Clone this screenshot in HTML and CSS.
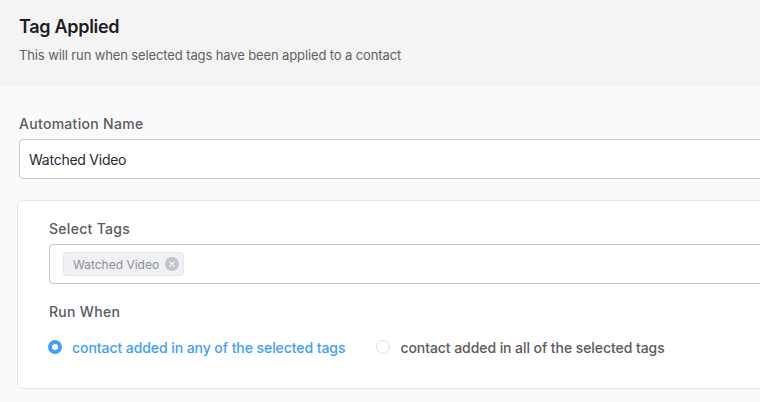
FILE: index.html
```html
<!DOCTYPE html>
<html>
<head>
<meta charset="utf-8">
<link rel="stylesheet" href="styles.css">
</head>
<body>
<div class="header">
  <h1 class="title">Tag Applied</h1>
  <p class="subtitle">This will run when selected tags have been applied to a contact</p>
</div>
<div class="main">
  <div class="content">
    <label class="label">Automation Name</label>
    <div class="input">Watched Video</div>
    <div class="card">
      <label class="label">Select Tags</label>
      <div class="input tags">
        <span class="chip">Watched Video<span class="chip-close"><svg viewBox="0 0 14 14" width="14" height="14"><circle cx="7" cy="7" r="7" fill="#c0c4cc"/><path d="M4.8 4.8 L9.2 9.2 M9.2 4.8 L4.8 9.2" stroke="#fff" stroke-width="1.1" stroke-linecap="round"/></svg></span></span>
      </div>
      <label class="label run">Run When</label>
      <div class="radios">
        <span class="radio checked"><span class="dot"></span><span class="rtext">contact added in any of the selected tags</span></span>
        <span class="radio"><span class="dot"></span><span class="rtext">contact added in all of the selected tags</span></span>
      </div>
    </div>
  </div>
</div>
</body>
</html>
```
FILE: styles.css
```css
html, body {
  margin: 0;
  padding: 0;
  overflow: hidden;
  background: #fafafa;
  font-family: Inter, "Noto Sans", sans-serif;
}
.header {
  background: #f4f4f5;
  padding: 16px 19px 22px;
}
.title {
  margin: 0 0 8px;
  font-size: 18px;
  line-height: 22px;
  font-weight: 600;
  color: #1d1d1f;
  letter-spacing: -0.3px;
}
.subtitle {
  margin: 0;
  font-size: 13px;
  line-height: 18px;
  color: #606266;
  letter-spacing: -0.12px;
}
.main {
  background: #fafafa;
  padding: 28px 0 14px 19px;
  overflow: hidden;
}
.content {
  margin-right: -60px;
  display: flex;
  flex-direction: column;
}
.label {
  display: block;
  font-size: 14px;
  line-height: 20px;
  font-weight: 500;
  color: #5a5a60;
  margin-bottom: 5px;
  letter-spacing: 0.3px;
}
.input {
  box-sizing: border-box;
  height: 40px;
  background: #fff;
  border: 1px solid #c6c6cb;
  border-radius: 4px;
  padding: 0 9px;
  display: flex;
  align-items: center;
  font-size: 14px;
  color: #2b2b30;
  letter-spacing: -0.25px;
}
.card {
  margin-top: 21px;
  margin-left: -2px;
  background: #fff;
  border: 1px solid #e3e3e6;
  border-radius: 6px;
  padding: 18px 31px 31px;
}
.tags {
  padding: 0 13px;
  letter-spacing: 0;
}
.chip {
  display: inline-flex;
  align-items: center;
  height: 24px;
  box-sizing: border-box;
  padding: 0 4px 0 9px;
  background: #f0f1f4;
  border: 1px solid #e6e7ea;
  border-radius: 4px;
  font-size: 12px;
  color: #8e8f95;
}
.chip-close {
  display: inline-flex;
  margin-left: 6px;
}
.run {
  margin-top: 18px;
  margin-bottom: 16px;
}
.radios {
  display: flex;
  align-items: center;
  gap: 32px;
  height: 20px;
  margin-top: -1px;
}
.radio {
  display: inline-flex;
  align-items: center;
  font-size: 14px;
  font-weight: 500;
  color: #5a5a60;
  letter-spacing: -0.07px;
}
.dot {
  box-sizing: border-box;
  width: 14px;
  height: 14px;
  border-radius: 50%;
  border: 1px solid #dcdfe6;
  background: #fff;
  margin-right: 10px;
  margin-left: -1px;
}
.radio.checked .dot {
  border: 4px solid #409eff;
  background: #fff;
}
.radio.checked {
  color: #409eff;
}
```
